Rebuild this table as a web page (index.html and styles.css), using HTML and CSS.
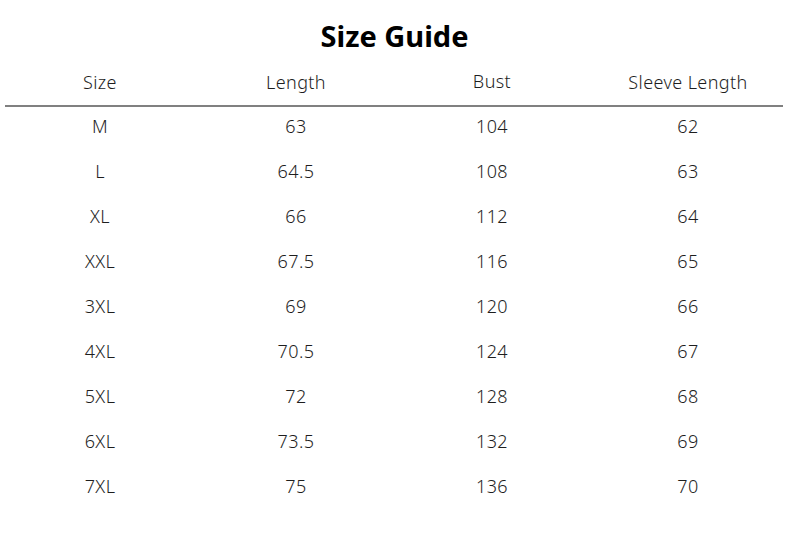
FILE: index.html
```html
<!DOCTYPE html>
<html>
<head>
<meta charset="utf-8">
<link rel="stylesheet" href="styles.css">
</head>
<body>
<div class="page">
  <h1 class="title">Size Guide</h1>
  <div class="head">
    <div>Size</div><div>Length</div><div class="bust">Bust</div><div>Sleeve Length</div>
  </div>
  <div class="rule"></div>
  <div class="rows">
    <div class="row"><div>M</div><div>63</div><div>104</div><div>62</div></div>
    <div class="row"><div>L</div><div>64.5</div><div>108</div><div>63</div></div>
    <div class="row"><div>XL</div><div>66</div><div>112</div><div>64</div></div>
    <div class="row"><div>XXL</div><div>67.5</div><div>116</div><div>65</div></div>
    <div class="row"><div>3XL</div><div>69</div><div>120</div><div>66</div></div>
    <div class="row"><div>4XL</div><div>70.5</div><div>124</div><div>67</div></div>
    <div class="row"><div>5XL</div><div>72</div><div>128</div><div>68</div></div>
    <div class="row"><div>6XL</div><div>73.5</div><div>132</div><div>69</div></div>
    <div class="row"><div>7XL</div><div>75</div><div>136</div><div>70</div></div>
  </div>
</div>
</body>
</html>
```
FILE: styles.css
```css
html, body {
  margin: 0;
  padding: 0;
  background: #fff;
}
.page {
  width: 789px;
  height: 535px;
  font-family: "Noto Sans", "Open Sans", sans-serif;
  color: #1e1e1e;
}
.title {
  margin: 0;
  padding-top: 16px;
  height: 40px;
  line-height: 40px;
  font-size: 29px;
  font-weight: 700;
  text-align: center;
  color: #000;
}
.head, .row {
  display: grid;
  grid-template-columns: repeat(4, 196px);
  padding-left: 2px;
  text-align: center;
  font-size: 18px;
  font-weight: 300;
  letter-spacing: 0.4px;
}
.head {
  height: 28px;
  line-height: 28px;
  margin-top: 12px;
}
.head .bust {
  position: relative;
  top: -1px;
}
.rule {
  margin: 9px 6px 0 5px;
  height: 2px;
  background: #808080;
}
.rows {
  padding-top: 5px;
}
.row {
  height: 45px;
  line-height: 28px;
}
```
